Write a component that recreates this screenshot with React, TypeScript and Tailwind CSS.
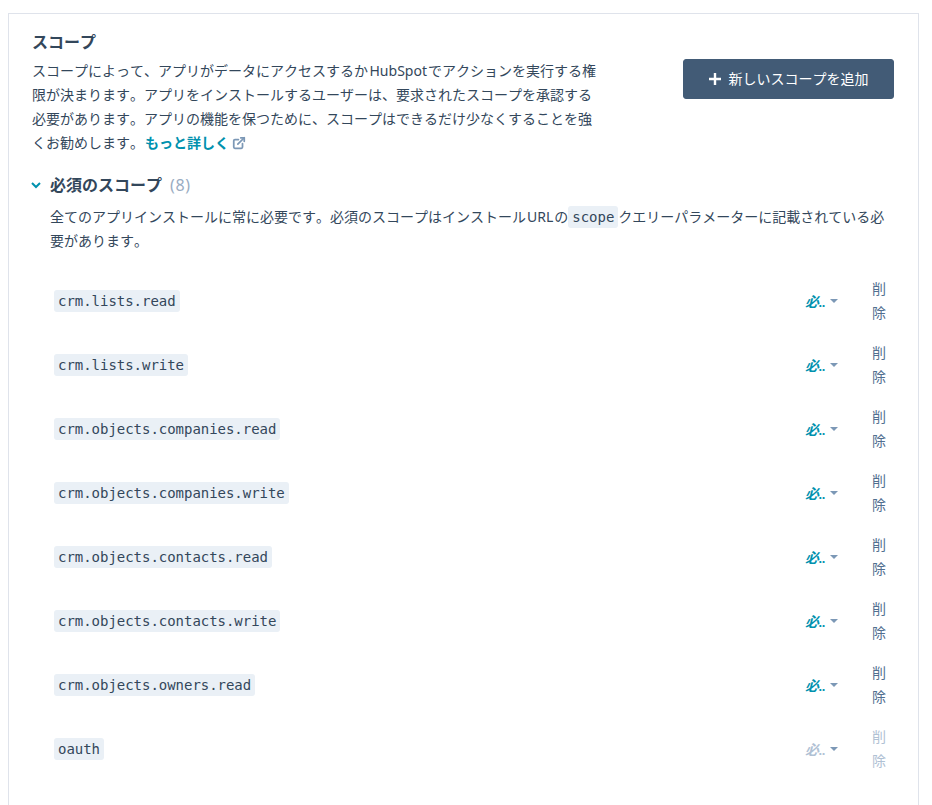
import { ExternalLink } from 'lucide-react';

const jp = "font-['Noto_Sans','Noto_Sans_CJK_JP',sans-serif] [font-kerning:none] [text-spacing-trim:space-all]";
const mono = "font-['DejaVu_Sans_Mono',monospace] tracking-[-0.03px]";

const scopes = [
  'crm.lists.read',
  'crm.lists.write',
  'crm.objects.companies.read',
  'crm.objects.companies.write',
  'crm.objects.contacts.read',
  'crm.objects.contacts.write',
  'crm.objects.owners.read',
  'oauth',
];

function ScopeRow({ name, disabled }: { name: string; disabled?: boolean }) {
  return (
    <div className="flex h-16 items-center">
      <code className={`${mono} rounded-[3px] bg-[#eaf0f6] px-1 text-[14px] leading-[22px] text-[#33475b]`}>{name}</code>
      <div className="ml-auto flex items-center">
        <span className={`flex w-[23px] font-['Noto_Sans_CJK_JP',sans-serif] text-[14px] font-bold italic ${disabled ? 'text-[#b0c1d4]' : 'text-[#0091ae]'}`}>
          必<span className="font-['Lato']">..</span>
        </span>
        <span className="ml-[2px] h-0 w-0 border-x-[4px] border-t-[4px] border-x-transparent border-t-[#7c98b6]" />
        <span className={`ml-[34px] mr-[8px] w-[14px] text-[14px] leading-[24px] ${disabled ? 'text-[#b0c1d4]' : 'text-[#516f90]'}`}>
          削除
        </span>
      </div>
    </div>
  );
}

export default function App() {
  return (
    <div className={`${jp} h-[805px] overflow-hidden bg-white pl-2 pr-[13px] pt-[13px] text-[#33475b]`}>
      <div className="border border-[#dfe3eb] pl-[23px] pr-[24px] pt-[16px] pb-[40px]">
        <div className="flex items-start justify-between">
          <div className="w-[570px]">
            <h2 className="text-[16px] font-bold leading-[24px]">スコープ</h2>
            <p className="mt-[5px] text-[14px] leading-[24px]">
              スコープによって、アプリがデータにアクセスするか<span className="pl-[1.5px] pr-px">HubSpot</span>でアクションを実行する権限が決まります。アプリをインストールするユーザーは、要求されたスコープを承認する必要があります。アプリの機能を保つために、スコープはできるだけ少なくすることを強くお勧めします。
              <a className="ml-px inline-flex items-center gap-[3px] font-bold text-[#0091ae]">
                もっと詳しく
                <ExternalLink className="h-3.5 w-3.5 text-[#7c98b6]" strokeWidth={3} />
              </a>
            </p>
          </div>
          <button className="mt-[29px] flex h-10 w-[211px] items-center justify-center gap-2 rounded-[3px] border border-[#425b76] bg-[#425b76] text-[14px] text-white">
            <svg width="12" height="12" viewBox="0 0 12 12" fill="none" stroke="white" strokeWidth="2.4">
              <path d="M6 0v12M0 6h12" />
            </svg>
            <span className="pb-[2px]">新しいスコープを追加</span>
          </button>
        </div>

        <div className="mt-[18px] flex items-center">
          <svg className="mr-[9px] ml-[-1px]" width="10" height="7" viewBox="0 0 10 7" fill="none" stroke="#0091ae" strokeWidth="2">
            <path d="M1 1l4 4 4-4" />
          </svg>
          <h3 className="text-[16px] font-bold leading-[24px]">必須のスコープ</h3>
          <span className="ml-[8px] text-[16px] tracking-[0.6px] text-[#99acc2]">(8)</span>
        </div>

        <p className="mt-[8px] pl-[18px] text-[14px] leading-[24px]">
          全てのアプリインストールに常に必要です。必須のスコープはインストール<span className="px-px">URL</span>の
          <code className={`${mono} rounded-[3px] bg-[#eaf0f6] px-1 py-[3px] text-[14px]`}>scope</code>
          クエリーパラメーターに記載されている必要があります。
        </p>

        <div className="mt-[16px] pl-[22px]">
          {scopes.map((s) => (
            <ScopeRow key={s} name={s} disabled={s === 'oauth'} />
          ))}
        </div>
      </div>
    </div>
  );
}
